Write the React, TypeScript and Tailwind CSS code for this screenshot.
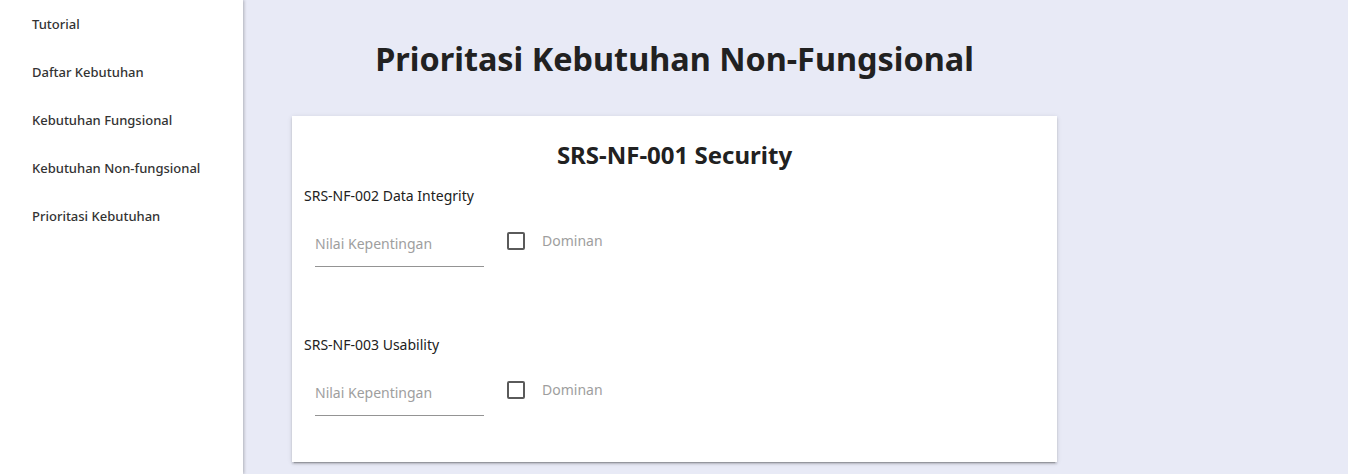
import React from "react";

const items = [
  "Tutorial",
  "Daftar Kebutuhan",
  "Kebutuhan Fungsional",
  "Kebutuhan Non-fungsional",
  "Prioritasi Kebutuhan",
];

const sections = ["SRS-NF-002 Data Integrity", "SRS-NF-003 Usability"];

function Section({ label, first }: { label: string; first: boolean }) {
  return (
    <div className={first ? "mt-[15px]" : "mt-[68px]"}>
      <div className="h-5 text-[14px] leading-5 text-[#212121]">{label}</div>
      <div className="mt-5 flex items-start">
        <div className="ml-[11px] w-[169px] border-b border-[#949494] pt-2 pb-[12px]">
          <div className="h-5 text-[14px] leading-5 text-[#9e9e9e]">Nilai Kepentingan</div>
        </div>
        <div className="ml-[23px] mt-[5px] flex items-center">
          <div className="h-[18px] w-[18px] rounded-[2px] border-2 border-[#5a5a5a] bg-white" />
          <div className="ml-[17px] text-[14px] leading-5 text-[#9e9e9e]">Dominan</div>
        </div>
      </div>
    </div>
  );
}

export default function App() {
  return (
    <div
      className="flex h-[474px] w-[1348px] overflow-hidden bg-[#e8eaf6]"
      style={{ fontFamily: '"Noto Sans", "Open Sans", sans-serif' }}
    >
      <aside className="z-10 h-full w-[243px] shrink-0 bg-white pt-px shadow-[1px_0_3px_rgba(0,0,0,0.25)]">
        {items.map((t) => (
          <div key={t} className="flex h-12 items-center px-8 text-[13px] font-medium text-[#333]">
            {t}
          </div>
        ))}
      </aside>
      <main className="flex-1">
        <div className="ml-[49px] w-[765px]">
          <h1 className="mt-[38px] text-center text-[32.4px] font-bold leading-10 text-[#212121]">
            Prioritasi Kebutuhan Non-Fungsional
          </h1>
          <div className="mt-[38px] h-[346px] bg-white px-3 pt-[23px] shadow-[0_2px_2px_rgba(0,0,0,0.14),0_1px_5px_rgba(0,0,0,0.12),0_3px_1px_-2px_rgba(0,0,0,0.2)]">
            <h2 className="text-center text-[24px] font-bold leading-8 text-[#212121]">
              SRS-NF-001 Security
            </h2>
            {sections.map((s, i) => (
              <Section key={s} label={s} first={i === 0} />
            ))}
          </div>
        </div>
      </main>
    </div>
  );
}
